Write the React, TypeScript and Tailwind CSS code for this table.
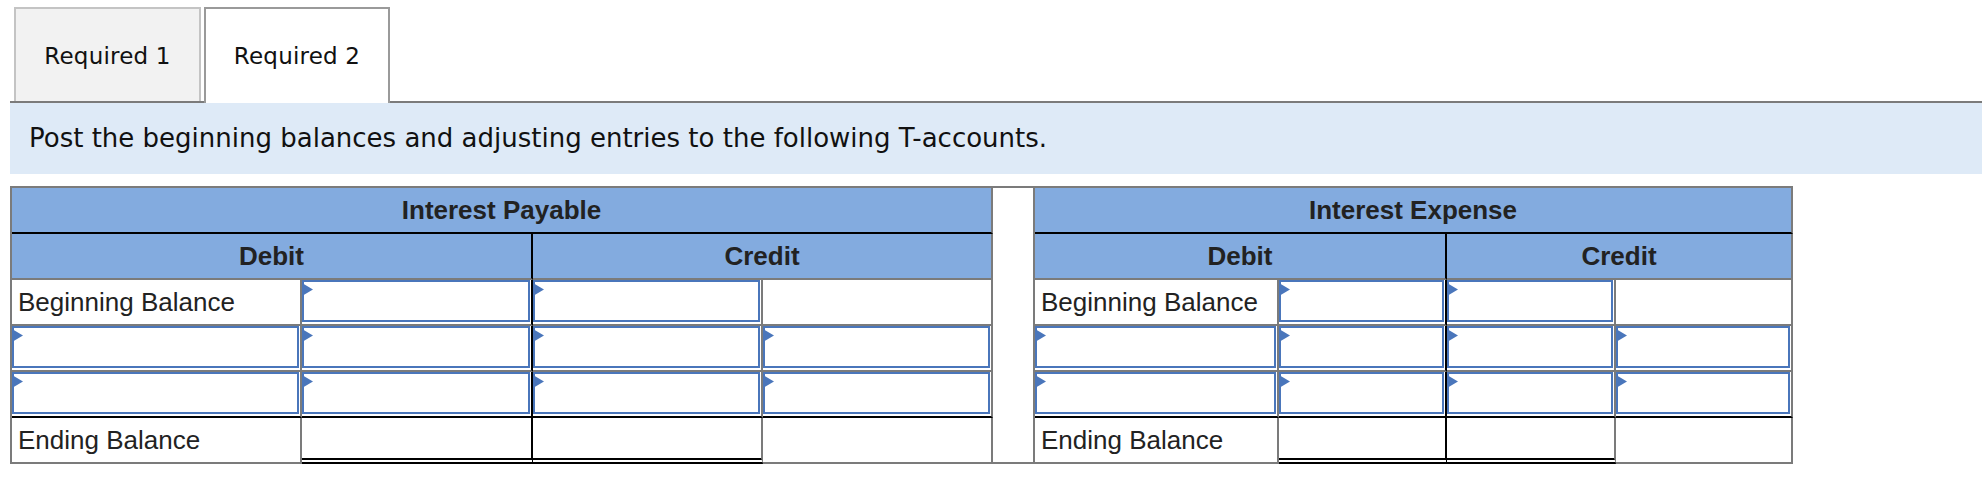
import React from "react";

const GRAY = "border-[#7b7b7b]";

function Tri() {
  return (
    <svg
      width="11"
      height="13"
      viewBox="0 0 11 13"
      className="absolute left-[-2px] top-[1px]"
    >
      <polygon points="0,0 11,6.5 0,13" fill="#4a76bb" />
    </svg>
  );
}

function InputCell({ rightBlack = false, bottomBlack = false }: { rightBlack?: boolean; bottomBlack?: boolean }) {
  return (
    <div
      className={
        "bg-white pr-[1px] pb-[2px] border-r-2 border-b-2 " +
        (rightBlack ? "border-r-black " : "border-r-[#7b7b7b] ") +
        (bottomBlack ? "border-b-black" : "border-b-[#7b7b7b]")
      }
    >
      <div className="relative h-full w-full border-2 border-[#4a76bb] bg-white">
        <Tri />
      </div>
    </div>
  );
}

function PlainCell({
  text,
  rightBlack = false,
  bottomBlack = false,
  doubleBottom = false,
}: {
  text?: string;
  rightBlack?: boolean;
  bottomBlack?: boolean;
  doubleBottom?: boolean;
}) {
  let cls = "bg-white flex items-center pl-[6px] border-r-2 ";
  cls += rightBlack ? "border-r-black " : "border-r-[#7b7b7b] ";
  if (doubleBottom) {
    cls += "border-b-[6px] [border-bottom-style:double] border-b-black";
  } else {
    cls += "border-b-2 " + (bottomBlack ? "border-b-black" : "border-b-[#7b7b7b]");
  }
  return (
    <div className={cls}>
      {text ? (
        <span className="text-[26px] leading-none text-[#222] whitespace-nowrap">{text}</span>
      ) : null}
    </div>
  );
}

function Header({ text, span, rightBlack = false, bottomBlack = false }: { text: string; span: 2 | 4; rightBlack?: boolean; bottomBlack?: boolean }) {
  return (
    <div
      className={
        (span === 4 ? "col-span-4 " : "col-span-2 ") +
        "bg-[#83abdf] flex items-center justify-center border-r-2 border-b-2 " +
        (rightBlack ? "border-r-black " : "border-r-[#7b7b7b] ") +
        (bottomBlack ? "border-b-black" : "border-b-[#7b7b7b]")
      }
    >
      <span className="text-[26px] font-bold leading-none text-[#222]">{text}</span>
    </div>
  );
}

export default function App() {
  return (
    <div
      className="w-[1982px] h-[482px] bg-white overflow-hidden"
      style={{ fontFamily: '"Liberation Sans", Arial, sans-serif' }}
    >
      {/* Tabs */}
      <div className="pt-[7px] pl-[10px]">
        <div className={"flex items-end border-b-2 " + GRAY}>
          <div
            className="ml-[4px] w-[187px] h-[94px] bg-[#f2f2f2] border-2 border-b-0 border-[#c4c4c4] flex items-center justify-center pt-[2px]"
            style={{ fontFamily: '"DejaVu Sans", Verdana, sans-serif' }}
          >
            <span className="text-[23px] text-[#111] tracking-[0.2px]">Required 1</span>
          </div>
          <div
            className="ml-[3px] w-[186px] h-[96px] -mb-[2px] bg-white border-2 border-b-0 border-[#9a9a9a] flex items-center justify-center"
            style={{ fontFamily: '"DejaVu Sans", Verdana, sans-serif' }}
          >
            <span className="text-[23px] text-[#111] tracking-[0.2px]">Required 2</span>
          </div>
        </div>
      </div>

      {/* Instruction band */}
      <div
        className="ml-[10px] h-[71px] bg-[#deeaf7] flex items-center pl-[19px]"
        style={{ fontFamily: '"DejaVu Sans", Verdana, sans-serif' }}
      >
        <span className="text-[26px] text-[#111] whitespace-nowrap">
          Post the beginning balances and adjusting entries to the following T-accounts.
        </span>
      </div>

      {/* T-accounts */}
      <div className="ml-[10px] mt-[12px]">
        <div
          className={
            "grid w-fit border-t-2 border-l-2 " +
            GRAY +
            " grid-cols-[290px_231px_230px_230px_42px_244px_168px_169px_177px] grid-rows-[46px_46px_46px_46px_46px_46px]"
          }
        >
          {/* Row 1 */}
          <Header text="Interest Payable" span={4} bottomBlack />
          <div className={"row-span-6 bg-white border-r-2 border-b-2 " + GRAY} />
          <Header text="Interest Expense" span={4} bottomBlack />

          {/* Row 2 */}
          <Header text="Debit" span={2} rightBlack />
          <Header text="Credit" span={2} />
          <Header text="Debit" span={2} rightBlack />
          <Header text="Credit" span={2} />

          {/* Row 3 */}
          <PlainCell text="Beginning Balance" />
          <InputCell rightBlack />
          <InputCell />
          <PlainCell />
          <PlainCell text="Beginning Balance" />
          <InputCell rightBlack />
          <InputCell />
          <PlainCell />

          {/* Row 4 */}
          <InputCell />
          <InputCell rightBlack />
          <InputCell />
          <InputCell />
          <InputCell />
          <InputCell rightBlack />
          <InputCell />
          <InputCell />

          {/* Row 5 */}
          <InputCell bottomBlack />
          <InputCell rightBlack bottomBlack />
          <InputCell bottomBlack />
          <InputCell bottomBlack />
          <InputCell bottomBlack />
          <InputCell rightBlack bottomBlack />
          <InputCell bottomBlack />
          <InputCell bottomBlack />

          {/* Row 6 */}
          <PlainCell text="Ending Balance" />
          <PlainCell rightBlack doubleBottom />
          <PlainCell doubleBottom />
          <PlainCell />
          <PlainCell text="Ending Balance" />
          <PlainCell rightBlack doubleBottom />
          <PlainCell doubleBottom />
          <PlainCell />
        </div>
      </div>
    </div>
  );
}
